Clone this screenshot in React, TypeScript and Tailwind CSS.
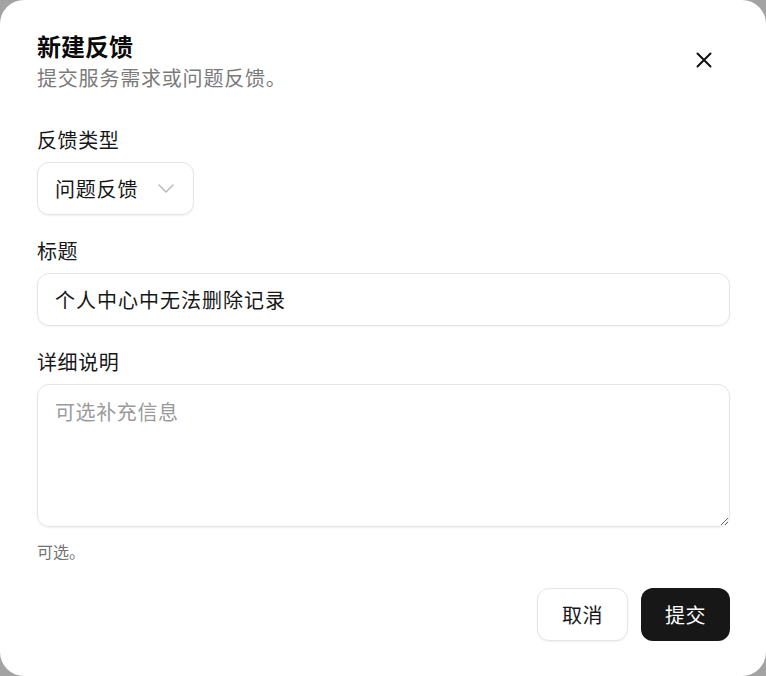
import React, { useState } from "react";

const font = "font-['Microsoft_YaHei','Noto_Sans_CJK_SC',sans-serif]";

export default function App() {
  const [title, setTitle] = useState("个人中心中无法删除记录");
  const [detail, setDetail] = useState("");

  return (
    <div className={`min-h-screen w-full bg-[#a3a3a3] ${font}`}>
      <div className="relative flex h-[676px] w-[766px] flex-col rounded-[24px] bg-white px-[37px] pt-[30px] pr-[36px]">
        <button
          type="button"
          className="absolute left-[696px] top-[52px] text-[#111]"
          aria-label="关闭"
        >
          <svg width="16" height="16" viewBox="0 0 16 16" fill="none" stroke="currentColor" strokeWidth="2" strokeLinecap="round">
            <path d="M1.5 1.5l13 13M14.5 1.5l-13 13" />
          </svg>
        </button>

        <h2 className="text-[24px] font-bold leading-[32px] text-[#0a0a0a]">新建反馈</h2>
        <p className="mt-[2px] text-[20px] leading-[28px] tracking-[0.8px] text-[#7a7a7a]">提交服务需求或问题反馈。</p>

        <label className="mt-[34px] text-[20px] leading-[28px] tracking-[0.6px] text-[#171717]">反馈类型</label>
        <button
          type="button"
          className="mt-[8px] flex h-[53px] w-[157px] items-center gap-[20px] rounded-[12px] border border-[#e5e5e5] bg-white pl-[17px] text-[20px] tracking-[0.8px] text-[#171717] shadow-[0_1px_2px_rgba(0,0,0,0.06)]"
        >
          <span>问题反馈</span>
          <svg width="16" height="9" viewBox="0 0 16 9" fill="none" stroke="#bcbcbc" strokeWidth="1.6" strokeLinecap="round" strokeLinejoin="round">
            <path d="M1 1l7 7 7-7" />
          </svg>
        </button>

        <label className="mt-[22px] text-[20px] leading-[28px] tracking-[0.6px] text-[#171717]">标题</label>
        <input
          value={title}
          onChange={(e) => setTitle(e.target.value)}
          className="mt-[8px] h-[53px] w-full rounded-[12px] border border-[#e5e5e5] px-[17px] text-[20px] tracking-[1px] text-[#171717] shadow-[0_1px_2px_rgba(0,0,0,0.06)] outline-none"
        />

        <label className="mt-[22px] text-[20px] leading-[28px] tracking-[0.6px] text-[#171717]">详细说明</label>
        <textarea
          value={detail}
          onChange={(e) => setDetail(e.target.value)}
          placeholder="可选补充信息"
          className="mt-[8px] h-[143px] w-full resize-y rounded-[12px] border border-[#e5e5e5] px-[17px] py-[13px] text-[20px] leading-[28px] tracking-[0.6px] text-[#171717] shadow-[0_1px_2px_rgba(0,0,0,0.06)] outline-none placeholder:text-[#9a9a9a]"
        />
        <p className="mt-[14px] text-[16px] leading-[20px] text-[#737373]">可选。</p>

        <div className="mt-[27px] flex justify-end gap-[13px]">
          <button
            type="button"
            className="h-[53px] w-[91px] rounded-[12px] border border-[#e5e5e5] bg-white text-[20px] tracking-[0.6px] text-[#171717] shadow-[0_1px_2px_rgba(0,0,0,0.06)]"
          >
            取消
          </button>
          <button
            type="button"
            className="h-[53px] w-[89px] rounded-[12px] bg-[#171717] text-[20px] tracking-[0.6px] text-white"
          >
            提交
          </button>
        </div>
      </div>
    </div>
  );
}
